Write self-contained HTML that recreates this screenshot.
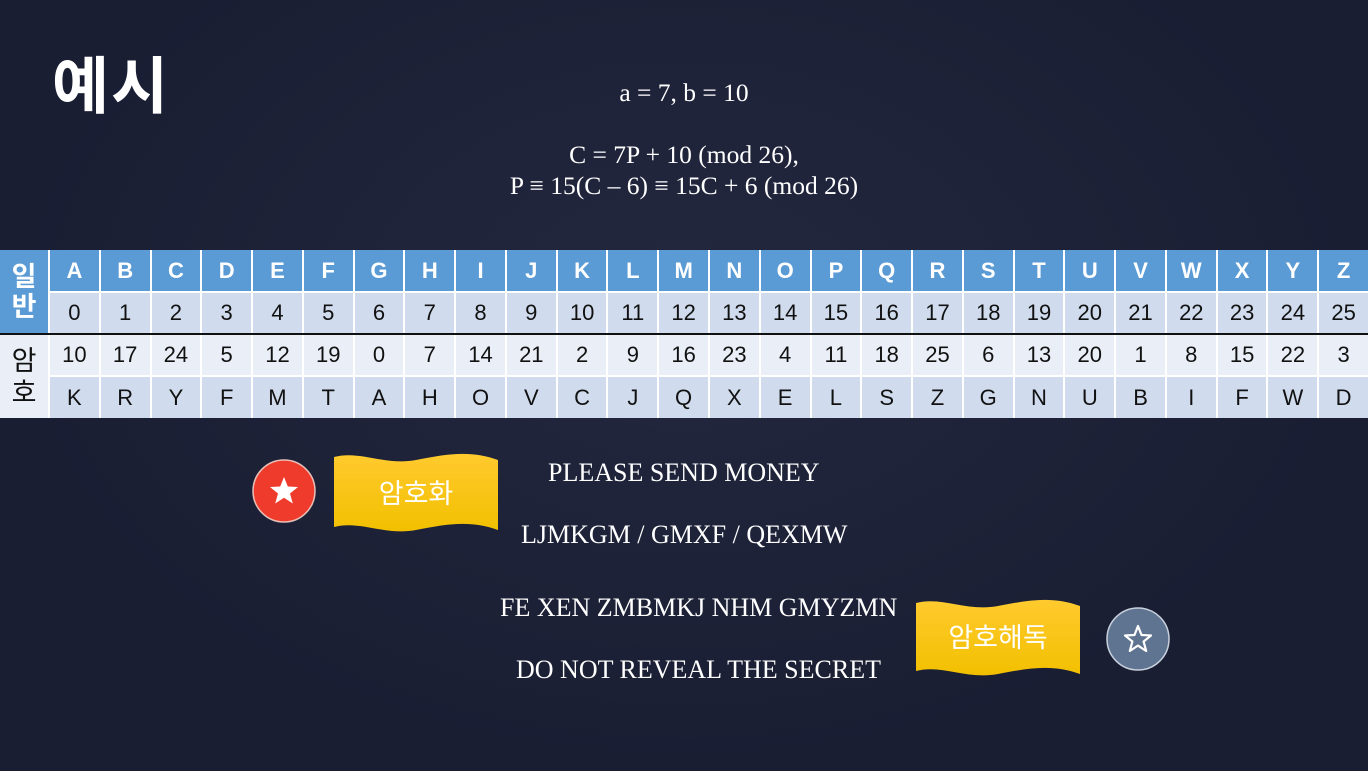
<!DOCTYPE html>
<html><head><meta charset="utf-8"><style>
*{margin:0;padding:0;box-sizing:border-box}
body{width:1368px;height:771px;overflow:hidden;background:#1c2036;position:relative;font-family:"Liberation Sans","Noto Sans CJK KR",sans-serif}
.bg{position:absolute;inset:0;background:radial-gradient(ellipse at 50% 40%,#23283f 0%,#1a1e33 70%)}
.title{position:absolute;left:52px;top:36px;font-size:62px;font-weight:bold;color:#fff;letter-spacing:2px}
.f{position:absolute;color:#fff;font-family:"Liberation Serif",serif;font-size:25.5px;text-align:center;width:1368px;left:0}
.grid{position:absolute;left:0;top:250px;width:1368px;height:168px;display:grid;grid-template-columns:48px repeat(26,1fr);grid-template-rows:41px 40px 40px 41px;gap:2px;background:#fff}
.grid div{display:flex;align-items:center;justify-content:center;font-size:22px;color:#111}
.h{background:#5b9bd5;color:#fff!important;font-weight:bold}
.r2{background:#d0dcee}.r3{background:#e9eef7}.r4{background:#d0dcee}
.lab1{grid-row:1/3;background:#5b9bd5;color:#fff!important;font-weight:bold;font-size:27px!important;line-height:30px;flex-direction:column}
.lab2{grid-row:3/5;background:#e9eef7;font-size:27px!important;line-height:32px;flex-direction:column}
.line{position:absolute;left:0;top:333px;width:1368px;height:2px;background:#111}
.t{position:absolute;color:#fff;font-family:"Liberation Serif",serif;font-size:26px}
</style></head><body>
<div class="bg"></div>
<div class="title">예시</div>
<div class="f" style="top:78px">a = 7, b = 10</div>
<div class="f" style="top:140px">C = 7P + 10 (mod 26),</div>
<div class="f" style="top:171px">P ≡ 15(C – 6) ≡ 15C + 6 (mod 26)</div>
<div class="grid">
<div class="lab1"><span>일</span><span>반</span></div>
<div class="h">A</div><div class="h">B</div><div class="h">C</div><div class="h">D</div><div class="h">E</div><div class="h">F</div><div class="h">G</div><div class="h">H</div><div class="h">I</div><div class="h">J</div><div class="h">K</div><div class="h">L</div><div class="h">M</div><div class="h">N</div><div class="h">O</div><div class="h">P</div><div class="h">Q</div><div class="h">R</div><div class="h">S</div><div class="h">T</div><div class="h">U</div><div class="h">V</div><div class="h">W</div><div class="h">X</div><div class="h">Y</div><div class="h">Z</div>
<div class="r2">0</div><div class="r2">1</div><div class="r2">2</div><div class="r2">3</div><div class="r2">4</div><div class="r2">5</div><div class="r2">6</div><div class="r2">7</div><div class="r2">8</div><div class="r2">9</div><div class="r2">10</div><div class="r2">11</div><div class="r2">12</div><div class="r2">13</div><div class="r2">14</div><div class="r2">15</div><div class="r2">16</div><div class="r2">17</div><div class="r2">18</div><div class="r2">19</div><div class="r2">20</div><div class="r2">21</div><div class="r2">22</div><div class="r2">23</div><div class="r2">24</div><div class="r2">25</div>
<div class="lab2"><span>암</span><span>호</span></div>
<div class="r3">10</div><div class="r3">17</div><div class="r3">24</div><div class="r3">5</div><div class="r3">12</div><div class="r3">19</div><div class="r3">0</div><div class="r3">7</div><div class="r3">14</div><div class="r3">21</div><div class="r3">2</div><div class="r3">9</div><div class="r3">16</div><div class="r3">23</div><div class="r3">4</div><div class="r3">11</div><div class="r3">18</div><div class="r3">25</div><div class="r3">6</div><div class="r3">13</div><div class="r3">20</div><div class="r3">1</div><div class="r3">8</div><div class="r3">15</div><div class="r3">22</div><div class="r3">3</div>
<div class="r4">K</div><div class="r4">R</div><div class="r4">Y</div><div class="r4">F</div><div class="r4">M</div><div class="r4">T</div><div class="r4">A</div><div class="r4">H</div><div class="r4">O</div><div class="r4">V</div><div class="r4">C</div><div class="r4">J</div><div class="r4">Q</div><div class="r4">X</div><div class="r4">E</div><div class="r4">L</div><div class="r4">S</div><div class="r4">Z</div><div class="r4">G</div><div class="r4">N</div><div class="r4">U</div><div class="r4">B</div><div class="r4">I</div><div class="r4">F</div><div class="r4">W</div><div class="r4">D</div>
</div>
<div class="line"></div>

<svg style="position:absolute;left:0;top:0" width="1368" height="771">
<defs><linearGradient id="g" x1="0" y1="0" x2="0" y2="1"><stop offset="0" stop-color="#ffca2e"/><stop offset="1" stop-color="#f2c000"/></linearGradient></defs>
<circle cx="284" cy="491" r="31" fill="#ee3b2b" stroke="#e8c0b8" stroke-width="1.5"/>
<polygon points="284,477 287.8,486.5 298,487 290,493.5 292.8,503.5 284,497.8 275.2,503.5 278,493.5 270,487 280.2,486.5" fill="#fff"/>
<path d="M334,457 C360,450 385,466 416,460 C447,454 470,450 498,460 L498,530 C470,520 447,524 416,530 C385,536 360,520 334,527 Z" fill="url(#g)"/>
<text x="416" y="503" fill="#fff" font-size="27" text-anchor="middle" font-family="Noto Sans CJK KR,sans-serif">암호화</text>
<path d="M916,603 C942,596 967,612 998,606 C1029,600 1052,596 1080,606 L1080,674 C1052,664 1029,668 998,674 C967,680 942,664 916,671 Z" fill="url(#g)"/>
<text x="998" y="647" fill="#fff" font-size="27" text-anchor="middle" font-family="Noto Sans CJK KR,sans-serif">암호해독</text>
<circle cx="1138" cy="639" r="31" fill="#5e7490" stroke="#c8d0dc" stroke-width="1.5"/>
<polygon points="1138,626 1141.5,635 1151,635.5 1143.6,641.5 1146.2,651 1138,645.6 1129.8,651 1132.4,641.5 1125,635.5 1134.5,635" fill="none" stroke="#fff" stroke-width="2.2" stroke-linejoin="round"/>
</svg>
<div class="t" style="left:548px;top:458px">PLEASE SEND MONEY</div>
<div class="t" style="left:521px;top:520px">LJMKGM / GMXF / QEXMW</div>
<div class="t" style="left:500px;top:593px">FE XEN ZMBMKJ NHM GMYZMN</div>
<div class="t" style="left:516px;top:655px">DO NOT REVEAL THE SECRET</div>
</body></html>
